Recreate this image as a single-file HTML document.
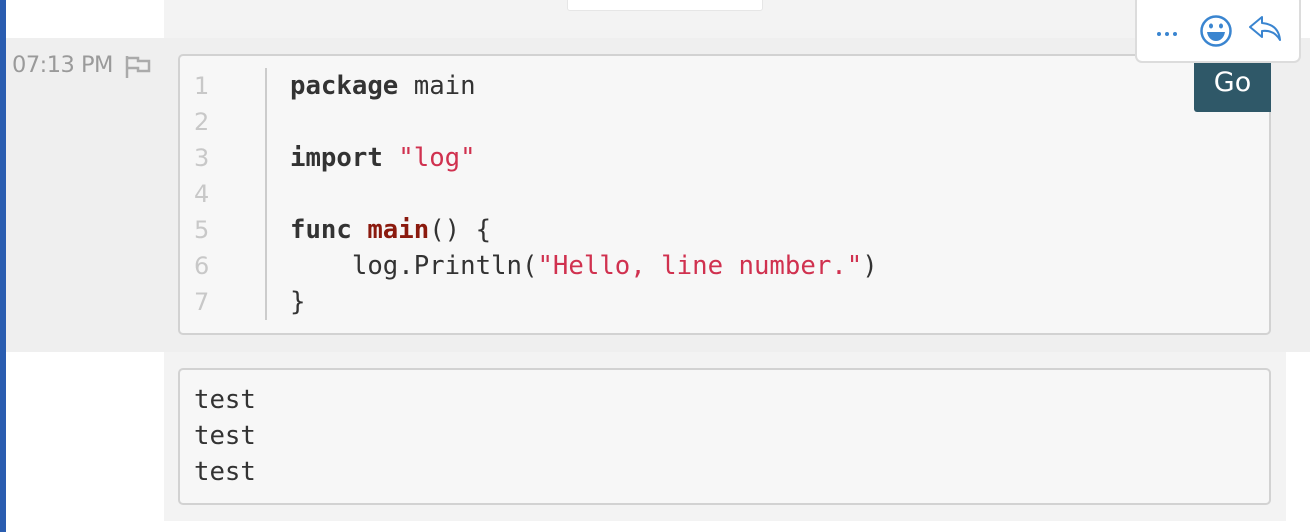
<!DOCTYPE html>
<html><head><meta charset="utf-8"><style>
*{margin:0;padding:0;box-sizing:border-box}
body{width:1310px;height:532px;background:#fff;position:relative;overflow:hidden;font-family:"Liberation Sans",sans-serif}
.abs{position:absolute}
.mono{font-family:"DejaVu Sans Mono","Liberation Mono",monospace;font-size:25.7px;color:#333}
.ln{position:absolute;left:14px;font-size:24px;color:#c8c8c8;font-family:"DejaVu Sans","Liberation Sans",sans-serif}
.cl{position:absolute;left:110px;white-space:pre;line-height:36px}
b{font-weight:bold;color:#333}
.s{color:#d0314f}
.f{color:#8b1a0e;font-weight:bold}
</style></head><body>
<div class="abs" style="left:0;top:0;width:6px;height:532px;background:#2a5db0"></div>
<div class="abs" style="left:164px;top:0;width:1122px;height:38px;background:#f3f3f3"></div>
<div class="abs" style="left:567px;top:-4px;width:196px;height:15px;background:#fff;border:1px solid #e6e6e6;border-radius:3px"></div>
<div class="abs" style="left:6px;top:38px;width:1304px;height:314px;background:#efefef"></div>
<div class="abs" style="left:12px;top:52px;font-size:22.5px;color:#9a9a9a;font-family:'DejaVu Sans','Liberation Sans',sans-serif;letter-spacing:-0.5px">07:13 PM</div>
<svg class="abs" style="left:124px;top:54px" width="28" height="26" viewBox="0 0 28 26"><path d="M3 2V24M3 4H14V7H25V17H14V14H3" fill="none" stroke="#aaa" stroke-width="2.5"/></svg>
<div class="abs mono" style="left:178px;top:54px;width:1093px;height:281px;background:#f7f7f7;border:2px solid #d2d2d2;border-radius:5px">
<div class="abs" style="left:85px;top:12px;width:2px;height:252px;background:#ccc"></div>
<div class="ln" style="top:16px">1</div><div class="ln" style="top:52px">2</div><div class="ln" style="top:88px">3</div><div class="ln" style="top:124px">4</div><div class="ln" style="top:160px">5</div><div class="ln" style="top:196px">6</div><div class="ln" style="top:232px">7</div>
<div class="cl" style="top:12px"><b>package</b> main

<b>import</b> <span class="s">"log"</span>

<b>func</b> <span class="f">main</span>() {
    log.Println(<span class="s">"Hello, line number."</span>)
}</div>
</div>
<div class="abs" style="left:1194px;top:62px;width:77px;height:50px;background:#2f5868;border-radius:0 0 0 3px;color:#fff;font-size:27px;text-align:center;line-height:42px;font-family:'DejaVu Sans','Liberation Sans',sans-serif">Go</div>
<div class="abs" style="left:1135px;top:-6px;width:166px;height:69px;background:#fff;border:2px solid #dcdcdc;border-radius:7px"></div>
<svg class="abs" style="left:1156px;top:30px" width="24" height="8"><circle cx="3" cy="4" r="2" fill="#3a85d0"/><circle cx="11" cy="4" r="2" fill="#3a85d0"/><circle cx="19" cy="4" r="2" fill="#3a85d0"/></svg>
<svg class="abs" style="left:1199px;top:14px" width="34" height="34" viewBox="0 0 34 34"><circle cx="17" cy="17" r="14.5" fill="none" stroke="#3a85d0" stroke-width="2.5"/><ellipse cx="12" cy="12" rx="2" ry="2.5" fill="#3a85d0"/><ellipse cx="22" cy="12" rx="2" ry="2.5" fill="#3a85d0"/><path d="M8 18H26C25 24 21 27 17 27C13 27 9 24 8 18Z" fill="#3a85d0"/></svg>
<svg class="abs" style="left:1248px;top:15px" width="34" height="28" viewBox="0 0 34 28"><path d="M14 2L2 12L14 22V16C22 15 28 18 32 25C31 15 25 9 14 8Z" fill="none" stroke="#3a85d0" stroke-width="2" stroke-linejoin="round"/></svg>
<div class="abs" style="left:164px;top:352px;width:1122px;height:169px;background:#f3f3f3"></div>
<div class="abs mono" style="left:178px;top:368px;width:1093px;height:137px;background:#f7f7f7;border:2px solid #d2d2d2;border-radius:5px">
<div class="cl" style="left:14px;top:12px">test
test
test</div>
</div>
</body></html>
